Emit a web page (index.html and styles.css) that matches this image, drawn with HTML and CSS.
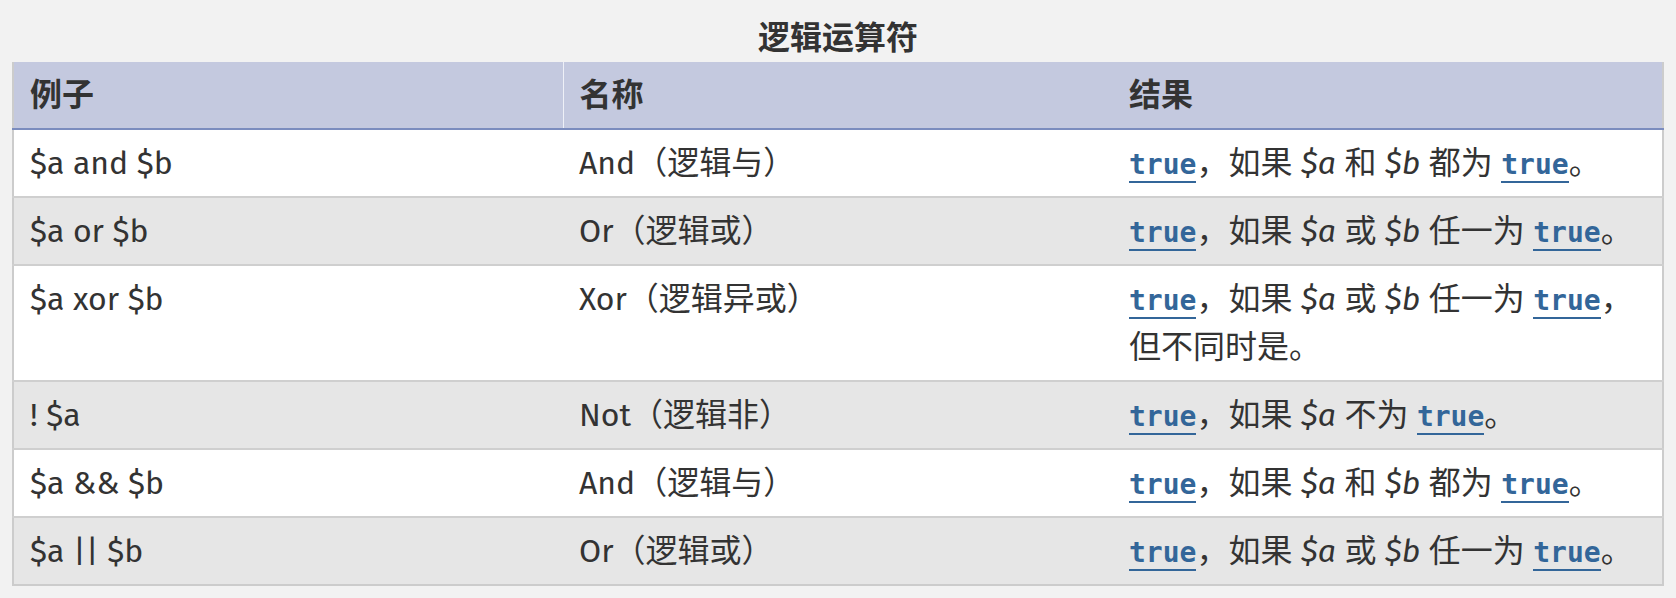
FILE: index.html
```html
<!DOCTYPE html>
<html lang="zh-CN">
<head>
<meta charset="utf-8">
<title>逻辑运算符</title>
<link rel="stylesheet" href="styles.css">
</head>
<body>
<div class="page">
  <table class="doctable">
    <caption class="caption">逻辑运算符</caption>
    <thead>
      <tr>
        <th class="col-first">例子</th>
        <th>名称</th>
        <th>结果</th>
      </tr>
    </thead>
    <tbody>
      <tr>
        <td>$a and $b</td>
        <td>And（逻辑与）</td>
        <td><a class="const" href="#">true</a>，如果 <var>$a</var> 和 <var>$b</var> 都为 <a class="const" href="#">true</a>。</td>
      </tr>
      <tr>
        <td>$a or $b</td>
        <td>Or（逻辑或）</td>
        <td><a class="const" href="#">true</a>，如果 <var>$a</var> 或 <var>$b</var> 任一为 <a class="const" href="#">true</a>。</td>
      </tr>
      <tr>
        <td>$a xor $b</td>
        <td>Xor（逻辑异或）</td>
        <td><a class="const" href="#">true</a>，如果 <var>$a</var> 或 <var>$b</var> 任一为 <a class="const" href="#">true</a>，但不同时是。</td>
      </tr>
      <tr>
        <td>! $a</td>
        <td>Not（逻辑非）</td>
        <td><a class="const" href="#">true</a>，如果 <var>$a</var> 不为 <a class="const" href="#">true</a>。</td>
      </tr>
      <tr>
        <td>$a &amp;&amp; $b</td>
        <td>And（逻辑与）</td>
        <td><a class="const" href="#">true</a>，如果 <var>$a</var> 和 <var>$b</var> 都为 <a class="const" href="#">true</a>。</td>
      </tr>
      <tr>
        <td>$a || $b</td>
        <td>Or（逻辑或）</td>
        <td><a class="const" href="#">true</a>，如果 <var>$a</var> 或 <var>$b</var> 任一为 <a class="const" href="#">true</a>。</td>
      </tr>
    </tbody>
  </table>
</div>
</body>
</html>
```

FILE: styles.css
```css
html, body {
  margin: 0;
  padding: 0;
  background: #f2f2f2;
}

body {
  font-family: "Fira Sans", "Open Sans", "Noto Sans CJK SC", sans-serif;
  font-size: 32px;
  line-height: 48px;
  color: #333;
}

.page {
  padding: 14px 12px 0 12px;
}

.doctable {
  width: 100%;
  border-collapse: collapse;
  table-layout: fixed;
  border-left: 2px solid #ccc;
  border-right: 2px solid #ccc;
  border-bottom: 2px solid #ccc;
}

.caption {
  font-weight: bold;
  text-align: center;
  line-height: 48px;
  padding: 0;
}

.doctable th {
  background: #c4c9df;
  text-align: left;
  font-weight: bold;
  padding: 9px 16px;
  border-bottom: 2px solid #7b8cbe;
  vertical-align: top;
}

.doctable th.col-first {
  border-right: 1px solid #eef0f7;
}

.doctable td {
  padding: 9px 16px;
  vertical-align: top;
  border-top: 2px solid #cfcfcf;
}

.doctable tbody tr:first-child td {
  border-top: none;
}

.doctable tbody tr:nth-child(odd) td {
  background: #fff;
}

.doctable tbody tr:nth-child(even) td {
  background: #e6e6e6;
}

var {
  font-style: italic;
  line-height: 1;
}

.const {
  font-family: "DejaVu Sans Mono", "Liberation Mono", monospace;
  font-weight: bold;
  font-size: 28px;
  line-height: 1;
  color: #336699;
  text-decoration: none;
  border-bottom: 2px solid #336699;
}
```
